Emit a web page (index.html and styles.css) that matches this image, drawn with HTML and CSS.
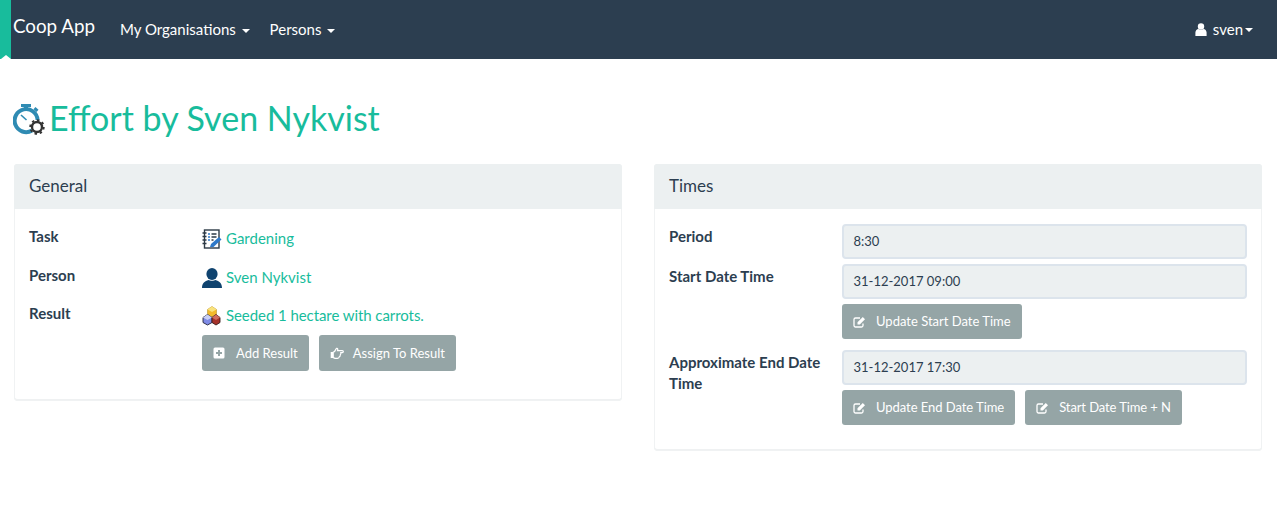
FILE: index.html
```html
<!doctype html>
<html lang="en">
    <head>
        <meta charset="UTF-8" />
        <title>Effort by Sven Nykvist</title>
        <link rel="stylesheet" href="styles.css">
    </head>
    <body>
        <nav class="navbar">
            <div class="nav-left">
                <a class="brand" href="#">Coop App</a>
                <a class="nav-link" href="#">My Organisations <span class="caret"></span></a>
                <a class="nav-link" href="#">Persons <span class="caret"></span></a>
            </div>
            <a class="nav-user" href="#">
                <svg class="user-icon" viewBox="0 0 12 13" width="12" height="13">
                    <circle cx="6" cy="3.4" r="3.2" fill="#fff" />
                    <path d="M0.4 13 V9.6 C0.4 7.4 2 6.2 3.4 6 C4.2 6.8 7.8 6.8 8.6 6 C10 6.2 11.6 7.4 11.6 9.6 V13 Z" fill="#fff" />
                </svg>
                sven<span class="caret caret-tight"></span>
            </a>
        </nav>

        <h1 class="page-title">
            <svg class="title-icon" viewBox="0 0 32 32" width="32" height="32">
                <rect x="8" y="1" width="10" height="3" fill="#2f8bb3" />
                <rect x="11" y="3" width="4" height="4" fill="#2f8bb3" />
                <rect x="21" y="5" width="4" height="3" fill="#2f8bb3" transform="rotate(40 23 6.5)" />
                <path d="M19 27.5 A11.5 11.5 0 1 1 24.6 17" fill="none" stroke="#2f8bb3" stroke-width="4" />
                <path d="M8 12 L13.5 17" stroke="#2f8bb3" stroke-width="1.6" />
                <circle cx="24" cy="24" r="5" fill="none" stroke="#333" stroke-width="2.4" />
                <circle cx="24" cy="24" r="6.8" fill="none" stroke="#333" stroke-width="1.8" stroke-dasharray="2.5 2.8" />
            </svg>
            Effort by Sven Nykvist
        </h1>

        <div class="columns">
            <section class="panel">
                <h2 class="panel-heading">General</h2>
                <div class="panel-body general">
                    <div class="row">
                        <div class="label">Task</div>
                        <div class="value">
                            <a href="#">
                                <svg class="item-icon" viewBox="0 0 20 20" width="20" height="20">
                                    <rect x="2.5" y="1" width="14.500" height="18" fill="#fff" stroke="#2d3a46" stroke-width="1.4" />
                                    <path d="M0.500 4h4M0.500 7.500h4M0.500 11h4M0.500 14.500h4" stroke="#2d3a46" stroke-width="1.3" />
                                    <path d="M6 5h2M6 8h2M6 11h2" stroke="#2f79c9" stroke-width="1.300" />
                                    <path d="M9.500 5h5M9.500 8h5M9.500 11h2" stroke="#2d3a46" stroke-width="1.300" />
                                    <path d="M8 18 L9 15 L17 8 L19.500 10.500 L11.500 18 Z" fill="#2f79c9" />
                                </svg>Gardening
                            </a>
                        </div>
                    </div>
                    <div class="row">
                        <div class="label">Person</div>
                        <div class="value">
                            <a href="#">
                                <svg class="item-icon" viewBox="0 0 20 20" width="20" height="20">
                                    <ellipse cx="10" cy="6" rx="5.600" ry="6" fill="#0f436f" />
                                    <path d="M0 20 C0 15 3 13 6.500 12 C8 13 12 13 13.500 12 C17 13 20 15 20 20 Z" fill="#0f436f" />
                                </svg>Sven Nykvist
                            </a>
                        </div>
                    </div>
                    <div class="row">
                        <div class="label">Result</div>
                        <div class="value">
                            <a class="result-link" href="#">
                                <svg class="item-icon" viewBox="0 0 20 20" width="20" height="20">
                                    <path d="M10 0.500 L14.500 3.500 V8.500 L10 11 L5.500 8.500 V3.500 Z" fill="#f2b92c" stroke="#b8962f" stroke-width="0.600" />
                                    <path d="M10 0.500 L14.500 3.500 L10 6 L5.500 3.500 Z" fill="#f9e37e" />
                                    <path d="M5.500 8.500 L10 11.500 V16.500 L5.500 19 L1 16.500 V11.500 Z" fill="#7f8be6" stroke="#26263a" stroke-width="0.900" />
                                    <path d="M5.500 8.500 L10 11.500 L5.500 14 L1 11.500 Z" fill="#c9cff5" />
                                    <path d="M14 8.500 L18 11.500 V16.500 L14 19 L10 16.500 V11.500 Z" fill="#a5322b" stroke="#3a1c1c" stroke-width="0.900" />
                                    <path d="M14 8.500 L18 11.500 L14 14 L10 11.500 Z" fill="#cf6c5f" />
                                </svg>Seeded 1 hectare with carrots.
                            </a>
                            <div class="buttons">
                                <a class="btn" href="#">
                                    <svg class="btn-icon icon-plus" viewBox="0 0 12 12" width="12" height="12">
                                        <path fill-rule="evenodd" d="M2 0.500H10A1.500 1.500 0 0 1 11.500 2V10A1.500 1.500 0 0 1 10 11.500H2A1.500 1.500 0 0 1 0.500 10V2A1.500 1.500 0 0 1 2 0.500ZM5 3V5H3V7H5V9H7V7H9V5H7V3Z" fill="#fff" />
                                    </svg>Add Result
                                </a>
                                <a class="btn" href="#">
                                    <svg class="btn-icon icon-hand" viewBox="0 0 14 12" width="14" height="12">
                                        <path d="M0.700 5H3.200V11H0.700Z" fill="#fff" />
                                        <path d="M3.200 5.200 C4.500 4.800 5.500 3.500 6 2 C6.300 1 7.800 1.200 7.800 2.500 L7.500 3.600 H12.300 C13.700 3.600 13.700 5.600 12.300 5.600 H10.800 C11 6.600 10.700 7.400 10.300 7.800 C10.400 8.800 10 9.500 9.300 9.800 C9.200 10.800 8.500 11.300 7.500 11.300 H5 L3.200 10.500 Z" fill="none" stroke="#fff" stroke-width="1.200" />
                                    </svg>Assign To Result
                                </a>
                            </div>
                        </div>
                    </div>
                </div>
            </section>

            <section class="panel">
                <h2 class="panel-heading">Times</h2>
                <div class="panel-body times">
                    <div class="row">
                        <div class="label">Period</div>
                        <div class="value">
                            <div class="field">8:30</div>
                        </div>
                    </div>
                    <div class="row row-actions">
                        <div class="label">Start Date Time</div>
                        <div class="value">
                            <div class="field">31-12-2017 09:00</div>
                            <div class="buttons">
                                <a class="btn" href="#">
                                    <svg class="btn-icon" viewBox="0 0 13 12" width="13" height="12">
                                        <path d="M10 7.500V9.500A1.500 1.500 0 0 1 8.500 11H2.500A1.500 1.500 0 0 1 1 9.500V3.500A1.500 1.500 0 0 1 2.500 2H7" fill="none" stroke="#fff" stroke-width="1.300" />
                                        <path d="M4.500 6.200 L9.800 1 L12 3.200 L6.800 8.500 H4.500 Z" fill="#fff" />
                                    </svg>Update Start Date Time
                                </a>
                            </div>
                        </div>
                    </div>
                    <div class="row row-actions">
                        <div class="label">Approximate End Date Time</div>
                        <div class="value">
                            <div class="field">31-12-2017 17:30</div>
                            <div class="buttons">
                                <a class="btn btn-end" href="#">
                                    <svg class="btn-icon" viewBox="0 0 13 12" width="13" height="12">
                                        <path d="M10 7.500V9.500A1.500 1.500 0 0 1 8.500 11H2.500A1.500 1.500 0 0 1 1 9.500V3.500A1.500 1.500 0 0 1 2.500 2H7" fill="none" stroke="#fff" stroke-width="1.300" />
                                        <path d="M4.500 6.200 L9.800 1 L12 3.200 L6.800 8.500 H4.500 Z" fill="#fff" />
                                    </svg>Update End Date Time
                                </a>
                                <a class="btn btn-plus" href="#">
                                    <svg class="btn-icon" viewBox="0 0 13 12" width="13" height="12">
                                        <path d="M10 7.500V9.500A1.500 1.500 0 0 1 8.500 11H2.500A1.500 1.500 0 0 1 1 9.500V3.500A1.500 1.500 0 0 1 2.500 2H7" fill="none" stroke="#fff" stroke-width="1.300" />
                                        <path d="M4.500 6.200 L9.800 1 L12 3.200 L6.800 8.500 H4.500 Z" fill="#fff" />
                                    </svg>Start Date Time + N
                                </a>
                            </div>
                        </div>
                    </div>
                </div>
            </section>
        </div>
    </body>
</html>
```

FILE: styles.css
```css
* {
    box-sizing: border-box;
}
body {
    margin: 0;
    background: #fff;
    color: #2c3e50;
    font-family: Lato, "Liberation Sans", sans-serif;
    font-size: 15px;
    line-height: 21px;
}
a {
    color: #18bc9c;
    text-decoration: none;
}
.navbar {
    position: relative;
    display: flex;
    justify-content: space-between;
    align-items: center;
    height: 59px;
    padding: 0 24px 0 13px;
    background: #2c3e50;
}
/* green tab on the left edge of the navbar */
.navbar::before {
    content: "";
    position: absolute;
    left: 0;
    top: 0;
    bottom: 0;
    width: 11px;
    background: #18bc9c;
}
.navbar::after {
    content: "";
    position: absolute;
    left: 1px;
    bottom: 0;
    border-left: 5px solid transparent;
    border-right: 5px solid transparent;
    border-bottom: 4px solid #fff;
}
.nav-left {
    position: relative;
    z-index: 1;
    display: flex;
    align-items: center;
}
.brand {
    margin-right: 25px;
    margin-top: -8px;
    color: #fff;
    font-size: 18.75px;
}
.nav-link {
    margin-right: 20px;
    color: #fff;
}
.nav-user {
    display: flex;
    align-items: center;
    color: #fff;
}
.user-icon {
    margin-right: 6px;
}
.caret {
    display: inline-block;
    margin-left: 2px;
    vertical-align: middle;
    border-top: 4px solid #fff;
    border-left: 4px solid transparent;
    border-right: 4px solid transparent;
}
.page-title {
    display: flex;
    align-items: center;
    margin: 35px 0 22px;
    padding-left: 13px;
    color: #18bc9c;
    font-size: 34px;
    font-weight: 400;
    line-height: 48px;
}
.title-icon {
    margin-right: 4px;
    margin-top: 2px;
}
.columns {
    display: grid;
    grid-template-columns: 608px 608px;
    gap: 32px;
    align-items: start;
    padding-left: 14px;
}
.panel {
    border-radius: 4px;
    background: #fff;
    box-shadow: inset 0 0 0 1px #f0f2f3, inset 0 -2px 0 #eff1f2;
}
.panel-heading {
    margin: 0;
    height: 45px;
    padding: 11px 15px;
    border-radius: 3px 3px 0 0;
    background: #ecf0f1;
    font-size: 17px;
    font-weight: 400;
    line-height: 22px;
}
.row {
    display: grid;
    grid-template-columns: 173px 1fr;
}
.general {
    padding: 17px 15px 14.5px;
}
.general .row {
    padding-bottom: 15.5px;
}
.general .value {
    padding-top: 2px;
}
.result-link {
    letter-spacing: -0.07px;
}
.times {
    padding: 15px 15px 15px;
}
.times .row {
    margin-bottom: 5px;
}
.times .row-actions {
    margin-bottom: 11px;
}
.label {
    font-weight: 700;
}
.times .label {
    padding-top: 2px;
    padding-right: 10px;
}
.item-icon {
    margin-right: 4px;
    vertical-align: -5px;
}
.field {
    height: 35px;
    padding: 5px 9.5px;
    border: 2px solid #dce4ec;
    border-radius: 4px;
    background: #ecf0f1;
    font-size: 13px;
    line-height: 20px;
}
.buttons {
    display: flex;
    gap: 10px;
    margin-top: 5px;
}
.general .buttons {
    margin-top: 9px;
}
.btn {
    display: flex;
    align-items: center;
    height: 35px;
    padding: 0 11px;
    border-radius: 3px;
    background: #95a5a6;
    color: #fff;
    font-size: 13px;
}
.general .btn {
    height: 36px;
}
.btn-end {
    letter-spacing: -0.05px;
}
.btn-plus {
    letter-spacing: -0.1px;
}
.btn-icon {
    margin-right: 10px;
}
.icon-plus {
    margin-right: 11px;
}
.icon-hand {
    margin-right: 9px;
}
```
